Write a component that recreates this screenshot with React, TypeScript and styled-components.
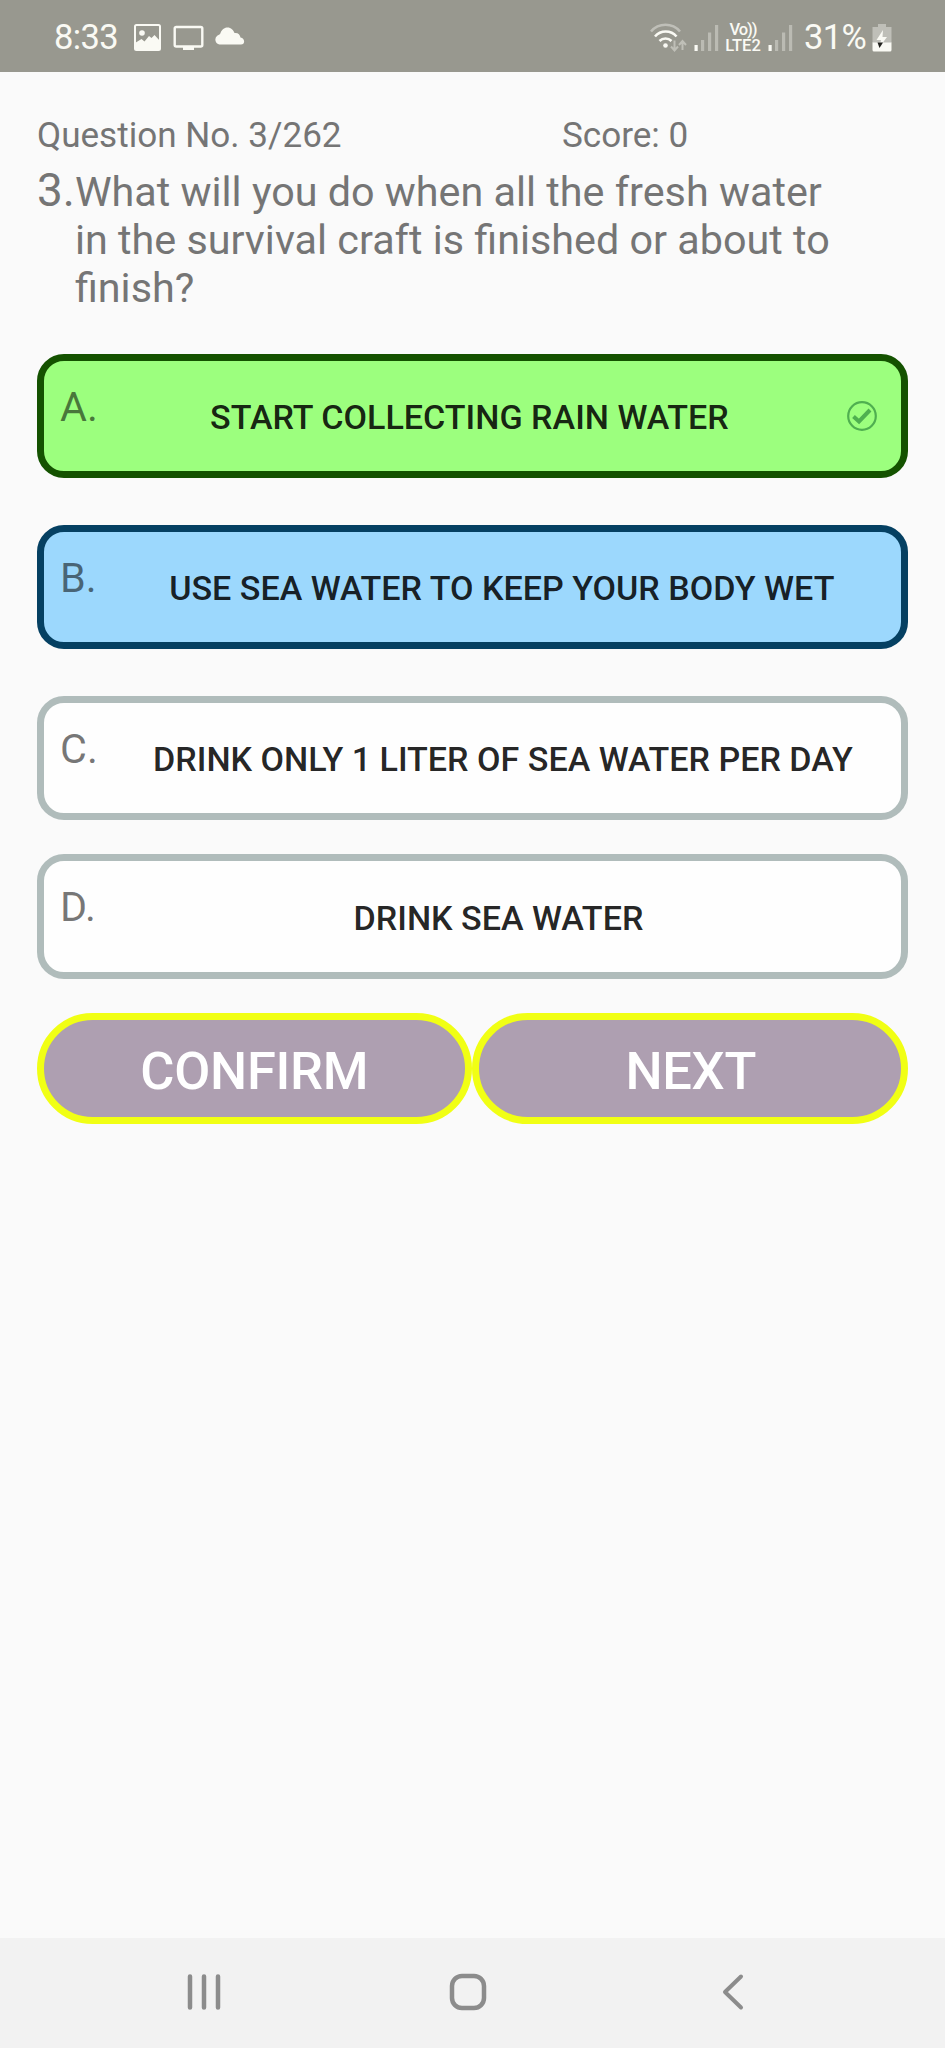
import React from "react";
import styled, { createGlobalStyle } from "styled-components";

const GlobalStyle = createGlobalStyle`
  * { box-sizing: border-box; }
  body { margin: 0; background: #fafafa; font-family: Roboto, "Liberation Sans", sans-serif; }
`;

const Screen = styled.div`
  display: flex;
  flex-direction: column;
  width: 945px;
  height: 2048px;
  background: #fafafa;
  overflow: hidden;
`;

const StatusBar = styled.header`
  display: flex;
  align-items: center;
  justify-content: space-between;
  height: 72px;
  padding: 3px 53px 0 54px;
  background: #98988f;
  color: #fafaf4;
`;

const StatusGroup = styled.div`
  display: flex;
  align-items: center;
`;

const StatusText = styled.span<{ $width: number; $gap?: number; $tracking: number }>`
  width: ${(p) => p.$width}px;
  margin-left: ${(p) => p.$gap ?? 0}px;
  font-size: 34.5px;
  line-height: 41px;
  letter-spacing: ${(p) => p.$tracking}px;
  white-space: nowrap;
`;

const Glyph = styled.svg<{ $gap?: number }>`
  display: block;
  flex: none;
  margin-left: ${(p) => p.$gap ?? 0}px;
`;

const Volte = styled.div`
  display: flex;
  flex-direction: column;
  align-items: center;
  width: 36px;
  margin-left: 6px;
  font-size: 16.5px;
  font-weight: 500;
  line-height: 15.7px;
  white-space: nowrap;
`;

const VolteMark = styled.span`
  letter-spacing: -1px;
`;

const Main = styled.main`
  flex: 1;
  padding: 43px 37px 0;
`;

const MetaRow = styled.div`
  display: flex;
  font-size: 35.1px;
  line-height: 40px;
  color: #757575;
`;

const Progress = styled.div`
  width: 525px;
`;

const Score = styled.div``;

const Question = styled.div`
  display: flex;
  align-items: baseline;
  margin-top: 8px;
  color: #757575;
`;

const QuestionNumber = styled.span`
  flex: none;
  font-size: 45.9px;
  line-height: 54px;
`;

const QuestionText = styled.p`
  width: 770px;
  margin: 0;
  font-size: 41.3px;
  line-height: 48.2px;
`;

const Options = styled.div`
  display: flex;
  flex-direction: column;
  margin-top: 41px;
`;

type Tone = "correct" | "picked" | "plain";

const tones: Record<Tone, { fill: string; line: string; gap: number }> = {
  correct: { fill: "#9cff7e", line: "#145200", gap: 46.5 },
  picked: { fill: "#9cd8fd", line: "#054062", gap: 46.5 },
  plain: { fill: "#fefefe", line: "#b0bcbb", gap: 34 },
};

const Option = styled.div<{ $tone: Tone }>`
  display: flex;
  align-items: flex-start;
  height: 124.5px;
  margin-bottom: ${(p) => tones[p.$tone].gap}px;
  padding-left: 16px;
  border: 7px solid ${(p) => tones[p.$tone].line};
  border-radius: 27px;
  background: ${(p) => tones[p.$tone].fill};
`;

const OptionLetter = styled.span`
  padding-top: 22px;
  font-size: 41.3px;
  line-height: 48px;
  color: rgba(0, 0, 0, 0.54);
`;

const OptionLabel = styled.span<{ $inset: number }>`
  flex: 1;
  padding-top: 36.5px;
  padding-left: ${(p) => p.$inset}px;
  font-size: 34.1px;
  font-weight: 500;
  line-height: 40px;
  text-align: center;
  white-space: nowrap;
  color: rgba(0, 0, 0, 0.87);
`;

const CheckIcon = styled.svg`
  flex: none;
  margin: 39px 23px 0 6px;
`;

const Actions = styled.div`
  display: flex;
`;

const ActionButton = styled.button<{ $nudge?: number }>`
  flex: 1;
  height: 111px;
  padding: 5px 0 0 ${(p) => p.$nudge ?? 0}px;
  border: 7.5px solid #f1ff14;
  border-radius: 56px;
  background: #ae9fb1;
  color: #fff;
  font-family: inherit;
  font-size: 52.4px;
  font-weight: 500;
  letter-spacing: -0.3px;
  line-height: 62px;
`;

const NavBar = styled.nav`
  display: flex;
  align-items: center;
  height: 110px;
  padding: 0 0 2px 186px;
  background: #f2f2f2;
`;

const Signal = ({ gap }: { gap: number }) => (
  <Glyph $gap={gap} width="25" height="28" viewBox="0 0 25 28" fill="currentColor">
    <rect x="0.5" y="21" width="3.2" height="6" />
    <g opacity="0.36">
      <rect x="7" y="16" width="3.2" height="11" />
      <rect x="14" y="8.5" width="3.2" height="18.5" />
      <rect x="21" y="1" width="3.2" height="26" />
    </g>
  </Glyph>
);

const options: { letter: string; label: string; tone: Tone; inset: number; checked?: boolean }[] = [
  { letter: "A.", label: "START COLLECTING RAIN WATER", tone: "correct", inset: 1, checked: true },
  { letter: "B.", label: "USE SEA WATER TO KEEP YOUR BODY WET", tone: "picked", inset: 6 },
  { letter: "C.", label: "DRINK ONLY 1 LITER OF SEA WATER PER DAY", tone: "plain", inset: 7 },
  { letter: "D.", label: "DRINK SEA WATER", tone: "plain", inset: 0 },
];

export default function App() {
  return (
    <Screen>
      <GlobalStyle />
      <StatusBar>
        <StatusGroup>
          <StatusText $width={80} $tracking={-0.6}>8:33</StatusText>
          <Glyph width="27" height="27" viewBox="0 0 27 27">
            <rect x="1" y="1" width="25" height="25" rx="1.5" fill="none" stroke="currentColor" strokeWidth="2" />
            <circle cx="8" cy="9" r="2.8" fill="currentColor" />
            <path d="M1 19 7.5 15 10.500 17.500 15 12 17.500 14 20.500 11 26 17V26H1Z" fill="currentColor" />
          </Glyph>
          <Glyph $gap={12} width="31" height="26" viewBox="0 0 31 26">
            <rect x="1.7" y="2" width="27.6" height="19.5" rx="1.5" fill="none" stroke="currentColor" strokeWidth="2.4" />
            <path d="M10 22H21V25H10Z" fill="currentColor" />
          </Glyph>
          <Glyph $gap={10} width="31" height="26" viewBox="0 0 31 26" fill="currentColor">
            <path d="M5.500 19.500A5 5 0 0 1 3.500 10.500C5 9.500 6 9.500 6.500 8 8 4 11 2.500 13.500 2.500 17 2.500 19.500 5 20.500 8 24 7.500 26 9.500 26.500 12.500 31.500 13.500 31 19.500 27 19.500Z" />
          </Glyph>
        </StatusGroup>
        <StatusGroup>
          <Glyph width="38" height="30" viewBox="0 0 38 30" fill="none" stroke="currentColor" strokeWidth="2.6">
            <path d="M1 8.500A19 19 0 0 1 30 8.500" opacity="0.4" />
            <path d="M5 13.500A14 14 0 0 1 26.500 13.500" />
            <path d="M9.500 18A8.500 8.500 0 0 1 21.500 18" />
            <circle cx="15.500" cy="22.500" r="2.300" fill="currentColor" stroke="none" />
            <g opacity="0.4" strokeWidth="2">
              <path d="M24.500 17.500V27M21 23.500 24.500 27.500 28 23.500" />
              <path d="M32.500 27V18.500M29 22 32.500 18 36 22" />
            </g>
          </Glyph>
          <Signal gap={6} />
          <Volte>
            <VolteMark>Vo))</VolteMark>
            <span>LTE2</span>
          </Volte>
          <Signal gap={7} />
          <StatusText $width={64} $gap={11} $tracking={-0.6}>31%</StatusText>
          <Glyph $gap={4} width="20" height="30" viewBox="0 0 20 30">
            <path d="M6 1H14V4H19.500V20H0.500V4H6Z" fill="currentColor" opacity="0.4" />
            <path d="M0.500 19.500H19.500V27Q19.500 28.500 18 28.500H2Q0.500 28.500 0.500 27Z" fill="currentColor" />
            <path d="M11 7 4.500 17H9L7.500 24 15 14H10.500Z" fill="currentColor" />
            <path d="M5.500 19.500H11L7.500 25Z" fill="#22221e" />
          </Glyph>
        </StatusGroup>
      </StatusBar>

      <Main>
        <MetaRow>
          <Progress>Question No. 3/262</Progress>
          <Score>Score: 0</Score>
        </MetaRow>
        <Question>
          <QuestionNumber>3.</QuestionNumber>
          <QuestionText>
            What will you do when all the fresh water in the survival craft is finished or about to finish?
          </QuestionText>
        </Question>
        <Options>
          {options.map((o) => (
            <Option key={o.letter} $tone={o.tone}>
              <OptionLetter>{o.letter}</OptionLetter>
              <OptionLabel $inset={o.inset}>{o.label}</OptionLabel>
              {o.checked && (
                <CheckIcon width="32" height="32" viewBox="0 0 32 32" fill="none" stroke="#4faf50">
                  <circle cx="16" cy="16" r="13.800" strokeWidth="2.200" />
                  <path d="M7.500 16.500 13 21.500 24 10" strokeWidth="4" />
                </CheckIcon>
              )}
            </Option>
          ))}
        </Options>
        <Actions>
          <ActionButton>CONFIRM</ActionButton>
          <ActionButton $nudge={2}>NEXT</ActionButton>
        </Actions>
      </Main>

      <NavBar>
        <Glyph width="36" height="38" viewBox="0 0 36 38" stroke="#8c8c8c" strokeWidth="4.500" strokeLinecap="round">
          <path d="M4 3.500V34.500M18 3.500V34.500M32 3.500V34.500" />
        </Glyph>
        <Glyph $gap={227} width="38" height="38" viewBox="0 0 38 38" fill="none" stroke="#8c8c8c" strokeWidth="4.500">
          <rect x="3" y="3" width="32" height="32" rx="10" />
        </Glyph>
        <Glyph $gap={235} width="22" height="38" viewBox="0 0 22 38" fill="none" stroke="#8c8c8c" strokeWidth="4" strokeLinecap="round" strokeLinejoin="round">
          <path d="M19 3.500 3 19 19 34.500" />
        </Glyph>
      </NavBar>
    </Screen>
  );
}
